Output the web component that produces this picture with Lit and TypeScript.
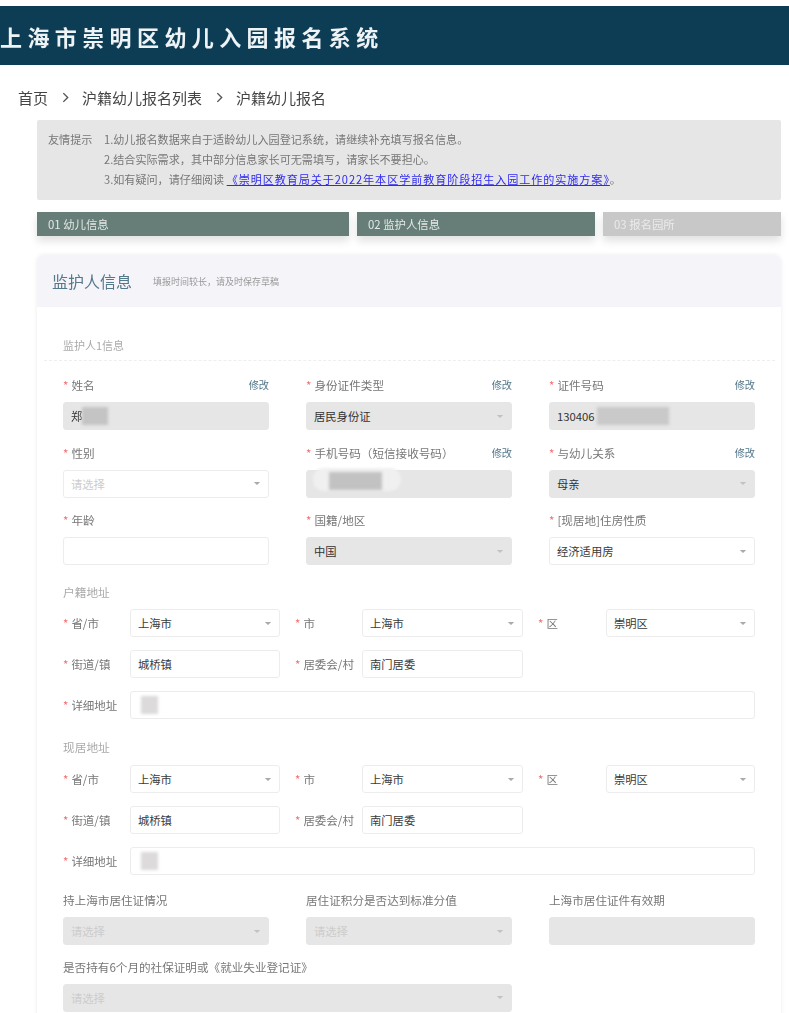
import { html, css, LitElement, nothing } from 'lit';
import { customElement } from 'lit/decorators.js';

type Field = {
  label: string;
  required?: boolean;
  edit?: boolean;
  value?: string;
  placeholder?: string;
  disabled?: boolean;
  select?: boolean;
  mask?: 'name' | 'id' | 'phone';
  span?: number;
};

const caret = html`<svg class="caret" viewBox="0 0 10 6" width="8" height="5">
  <path d="M1 1h8L5 5z" fill="currentColor"></path>
</svg>`;

const guardianFields: Field[] = [
  { label: '姓名', required: true, edit: true, value: '郑', disabled: true, mask: 'name' },
  { label: '身份证件类型', required: true, edit: true, value: '居民身份证', disabled: true, select: true },
  { label: '证件号码', required: true, edit: true, value: '130406', disabled: true, mask: 'id' },
  { label: '性别', required: true, placeholder: '请选择', select: true },
  { label: '手机号码（短信接收号码）', required: true, edit: true, disabled: true, mask: 'phone' },
  { label: '与幼儿关系', required: true, edit: true, value: '母亲', disabled: true, select: true },
  { label: '年龄', required: true },
  { label: '国籍/地区', required: true, value: '中国', disabled: true, select: true },
  { label: '[现居地]住房性质', required: true, value: '经济适用房', select: true },
];

const permitFields: Field[] = [
  { label: '持上海市居住证情况', placeholder: '请选择', disabled: true, select: true },
  { label: '居住证积分是否达到标准分值', placeholder: '请选择', disabled: true, select: true },
  { label: '上海市居住证件有效期', disabled: true },
  { label: '是否持有6个月的社保证明或《就业失业登记证》', placeholder: '请选择', disabled: true, select: true, span: 2 },
];

@customElement('app-root')
export class AppRoot extends LitElement {
  static override styles = css`
    :host {
      display: block;
      height: 1013px;
      overflow: hidden;
      background: #fff;
      font-family: 'Noto Sans CJK SC', 'Liberation Sans', sans-serif;
      color: #666;
    }

    .page {
      filter: blur(0.55px);
      padding-top: 6px;
    }

    .banner {
      height: 59px;
      display: flex;
      align-items: center;
      background: #0d3c55;
      color: #eef3f5;
      font-size: 22px;
      font-weight: 700;
      letter-spacing: 5.4px;
      white-space: nowrap;
    }

    .crumbs {
      display: flex;
      align-items: center;
      height: 55px;
      box-sizing: border-box;
      padding: 10px 0 0 18px;
      font-size: 15px;
      color: #444;
      white-space: nowrap;
    }

    .crumb-sep {
      width: 34px;
      display: flex;
      justify-content: center;
      color: #555;
    }

    .content {
      margin: 0 8px 0 37px;
    }

    .notice {
      display: flex;
      height: 80px;
      box-sizing: border-box;
      padding: 9px 11px;
      background: #e6e6e6;
      border-radius: 2px;
      font-size: 11.1px;
      line-height: 20px;
      color: #777;
      white-space: nowrap;
    }

    .notice-title {
      width: 56px;
      flex: none;
    }

    .notice a {
      color: #2f2af0;
      text-decoration: underline;
      letter-spacing: 0.92px;
    }

    .steps {
      display: grid;
      grid-template-columns: 312px 238px 178px;
      column-gap: 8px;
      margin-top: 12px;
    }

    .step {
      height: 24px;
      line-height: 24px;
      padding-left: 11px;
      font-size: 11.4px;
      background: #677e78;
      color: #e3e9e7;
      box-shadow: 0 5px 9px rgba(0, 0, 0, 0.12);
    }

    .step.todo {
      background: #c8c8c8;
      color: #ebebeb;
    }

    .card {
      margin-top: 19px;
      border-radius: 6px 6px 0 0;
      box-shadow: 0 0 4px rgba(0, 0, 0, 0.08);
      background: #fff;
    }

    .card-head {
      display: flex;
      align-items: center;
      height: 52px;
      padding-left: 15px;
      background: #f5f4f9;
      border-radius: 6px 6px 0 0;
    }

    .card-title {
      font-size: 16px;
      color: #55788a;
    }

    .card-sub {
      margin-left: 21px;
      font-size: 9px;
      color: #999;
    }

    .sub-head {
      margin: 23px 6px 0 7px;
      height: 31px;
      box-sizing: border-box;
      padding: 7px 0 0 19px;
      font-size: 11px;
      line-height: 16px;
      color: #aaa;
      border-bottom: 1px dashed #eee;
    }

    .form {
      padding: 15px 26px 24px;
    }

    .grid {
      display: grid;
      grid-template-columns: repeat(3, 206px);
      column-gap: 37px;
      row-gap: 13.5px;
    }

    .label-row {
      display: flex;
      justify-content: space-between;
      height: 18px;
      margin-bottom: 8px;
      line-height: 18px;
      font-size: 11.6px;
      color: #777;
      white-space: nowrap;
    }

    .star {
      color: #f56c6c;
      margin-right: 3px;
    }

    .edit {
      color: #55788a;
      font-size: 10.2px;
    }

    .control {
      position: relative;
      display: flex;
      align-items: center;
      justify-content: space-between;
      height: 28px;
      box-sizing: border-box;
      padding: 0 7px;
      border: 1px solid #ececec;
      border-radius: 3px;
      background: #fff;
      font-size: 11.3px;
      color: #3a3a3a;
      white-space: nowrap;
    }

    .control.disabled {
      background: #e6e6e6;
      border-color: #e6e6e6;
      color: #333;
    }

    .placeholder {
      color: #ccc;
    }

    .caret {
      color: #aaa;
      flex: none;
    }

    .disabled .caret {
      color: #c2c2c2;
    }

    .value {
      display: flex;
      align-items: center;
    }

    .blot {
      display: inline-block;
      height: 18px;
      filter: blur(1.5px);
      background: #c4c4c4;
    }

    .blot.name {
      width: 26px;
    }

    .blot.id {
      width: 72px;
      margin-left: 2px;
      background: #c9c9c9;
    }

    .blot.detail {
      width: 17px;
      margin-left: 3px;
      background: #dcdada;
    }

    /* the phone number is smudged out past the top of its box */
    .smear {
      position: absolute;
      left: 6px;
      top: -3px;
      width: 88px;
      height: 23px;
      border-radius: 11px;
      background: #f0f0f0;
      filter: blur(1.5px);
    }

    .smear-dark {
      position: absolute;
      left: 22px;
      top: 1px;
      width: 53px;
      height: 18px;
      background: #c2c2c2;
      filter: blur(1.5px);
    }

    .section {
      height: 18px;
      line-height: 18px;
      margin-bottom: 8px;
      font-size: 11.7px;
      color: #aaa;
    }

    .section.first {
      margin-top: 18px;
    }

    .section.next {
      margin-top: 19px;
      margin-bottom: 9px;
    }

    .address {
      display: grid;
      grid-template-columns: 67px 150px 82px 161px 83px 149px;
      row-gap: 13px;
      align-items: center;
    }

    .addr-label {
      font-size: 11.5px;
      color: #777;
      white-space: nowrap;
    }

    .addr-label.offset {
      padding-left: 15px;
    }

    .wide {
      grid-column: span 5;
    }

    .gap {
      grid-column: span 2;
    }

    .permits {
      margin-top: 16px;
      row-gap: 12.5px;
    }
  `;

  private renderControl(f: Field) {
    return html`
      <div class="control ${f.disabled ? 'disabled' : ''}">
        ${f.mask === 'phone'
          ? html`<span class="smear"></span><span class="smear-dark"></span>`
          : html`<span class="value">
              ${f.placeholder
                ? html`<span class="placeholder">${f.placeholder}</span>`
                : f.value ?? nothing}
              ${f.mask ? html`<span class="blot ${f.mask}"></span>` : nothing}
            </span>`}
        ${f.select ? caret : nothing}
      </div>
    `;
  }

  private renderField(f: Field) {
    return html`
      <div style=${f.span ? `grid-column: span ${f.span}` : nothing}>
        <div class="label-row">
          <span>${f.required ? html`<span class="star">*</span>` : nothing}${f.label}</span>
          ${f.edit ? html`<span class="edit">修改</span>` : nothing}
        </div>
        ${this.renderControl(f)}
      </div>
    `;
  }

  private renderAddress() {
    return html`
      <div class="address">
        <span class="addr-label"><span class="star">*</span>省/市</span>
        ${this.renderControl({ label: '', value: '上海市', select: true })}
        <span class="addr-label offset"><span class="star">*</span>市</span>
        ${this.renderControl({ label: '', value: '上海市', select: true })}
        <span class="addr-label offset"><span class="star">*</span>区</span>
        ${this.renderControl({ label: '', value: '崇明区', select: true })}

        <span class="addr-label"><span class="star">*</span>街道/镇</span>
        ${this.renderControl({ label: '', value: '城桥镇' })}
        <span class="addr-label offset"><span class="star">*</span>居委会/村</span>
        ${this.renderControl({ label: '', value: '南门居委' })}
        <span class="gap"></span>

        <span class="addr-label"><span class="star">*</span>详细地址</span>
        <div class="control wide"><span class="value"><span class="blot detail"></span></span></div>
      </div>
    `;
  }

  override render() {
    return html`
      <div class="page">
        <header class="banner">上海市崇明区幼儿入园报名系统</header>

        <nav class="crumbs">
          <span>首页</span>
          <span class="crumb-sep">
            <svg viewBox="0 0 8 12" width="7" height="11">
              <path d="M1.5 1l5 5-5 5" fill="none" stroke="currentColor" stroke-width="1.6"></path>
            </svg>
          </span>
          <span>沪籍幼儿报名列表</span>
          <span class="crumb-sep">
            <svg viewBox="0 0 8 12" width="7" height="11">
              <path d="M1.5 1l5 5-5 5" fill="none" stroke="currentColor" stroke-width="1.6"></path>
            </svg>
          </span>
          <span>沪籍幼儿报名</span>
        </nav>

        <div class="content">
          <div class="notice">
            <div class="notice-title">友情提示</div>
            <div>
              <div>1.幼儿报名数据来自于适龄幼儿入园登记系统，请继续补充填写报名信息。</div>
              <div>2.结合实际需求，其中部分信息家长可无需填写，请家长不要担心。</div>
              <div>3.如有疑问，请仔细阅读 <a href="#">《崇明区教育局关于2022年本区学前教育阶段招生入园工作的实施方案》</a>。</div>
            </div>
          </div>

          <div class="steps">
            <div class="step">01 幼儿信息</div>
            <div class="step">02 监护人信息</div>
            <div class="step todo">03 报名园所</div>
          </div>

          <section class="card">
            <div class="card-head">
              <span class="card-title">监护人信息</span>
              <span class="card-sub">填报时间较长，请及时保存草稿</span>
            </div>
            <div class="sub-head">监护人1信息</div>
            <div class="form">
              <div class="grid">${guardianFields.map((f) => this.renderField(f))}</div>
              <div class="section first">户籍地址</div>
              ${this.renderAddress()}
              <div class="section next">现居地址</div>
              ${this.renderAddress()}
              <div class="grid permits">${permitFields.map((f) => this.renderField(f))}</div>
            </div>
          </section>
        </div>
      </div>
    `;
  }
}
